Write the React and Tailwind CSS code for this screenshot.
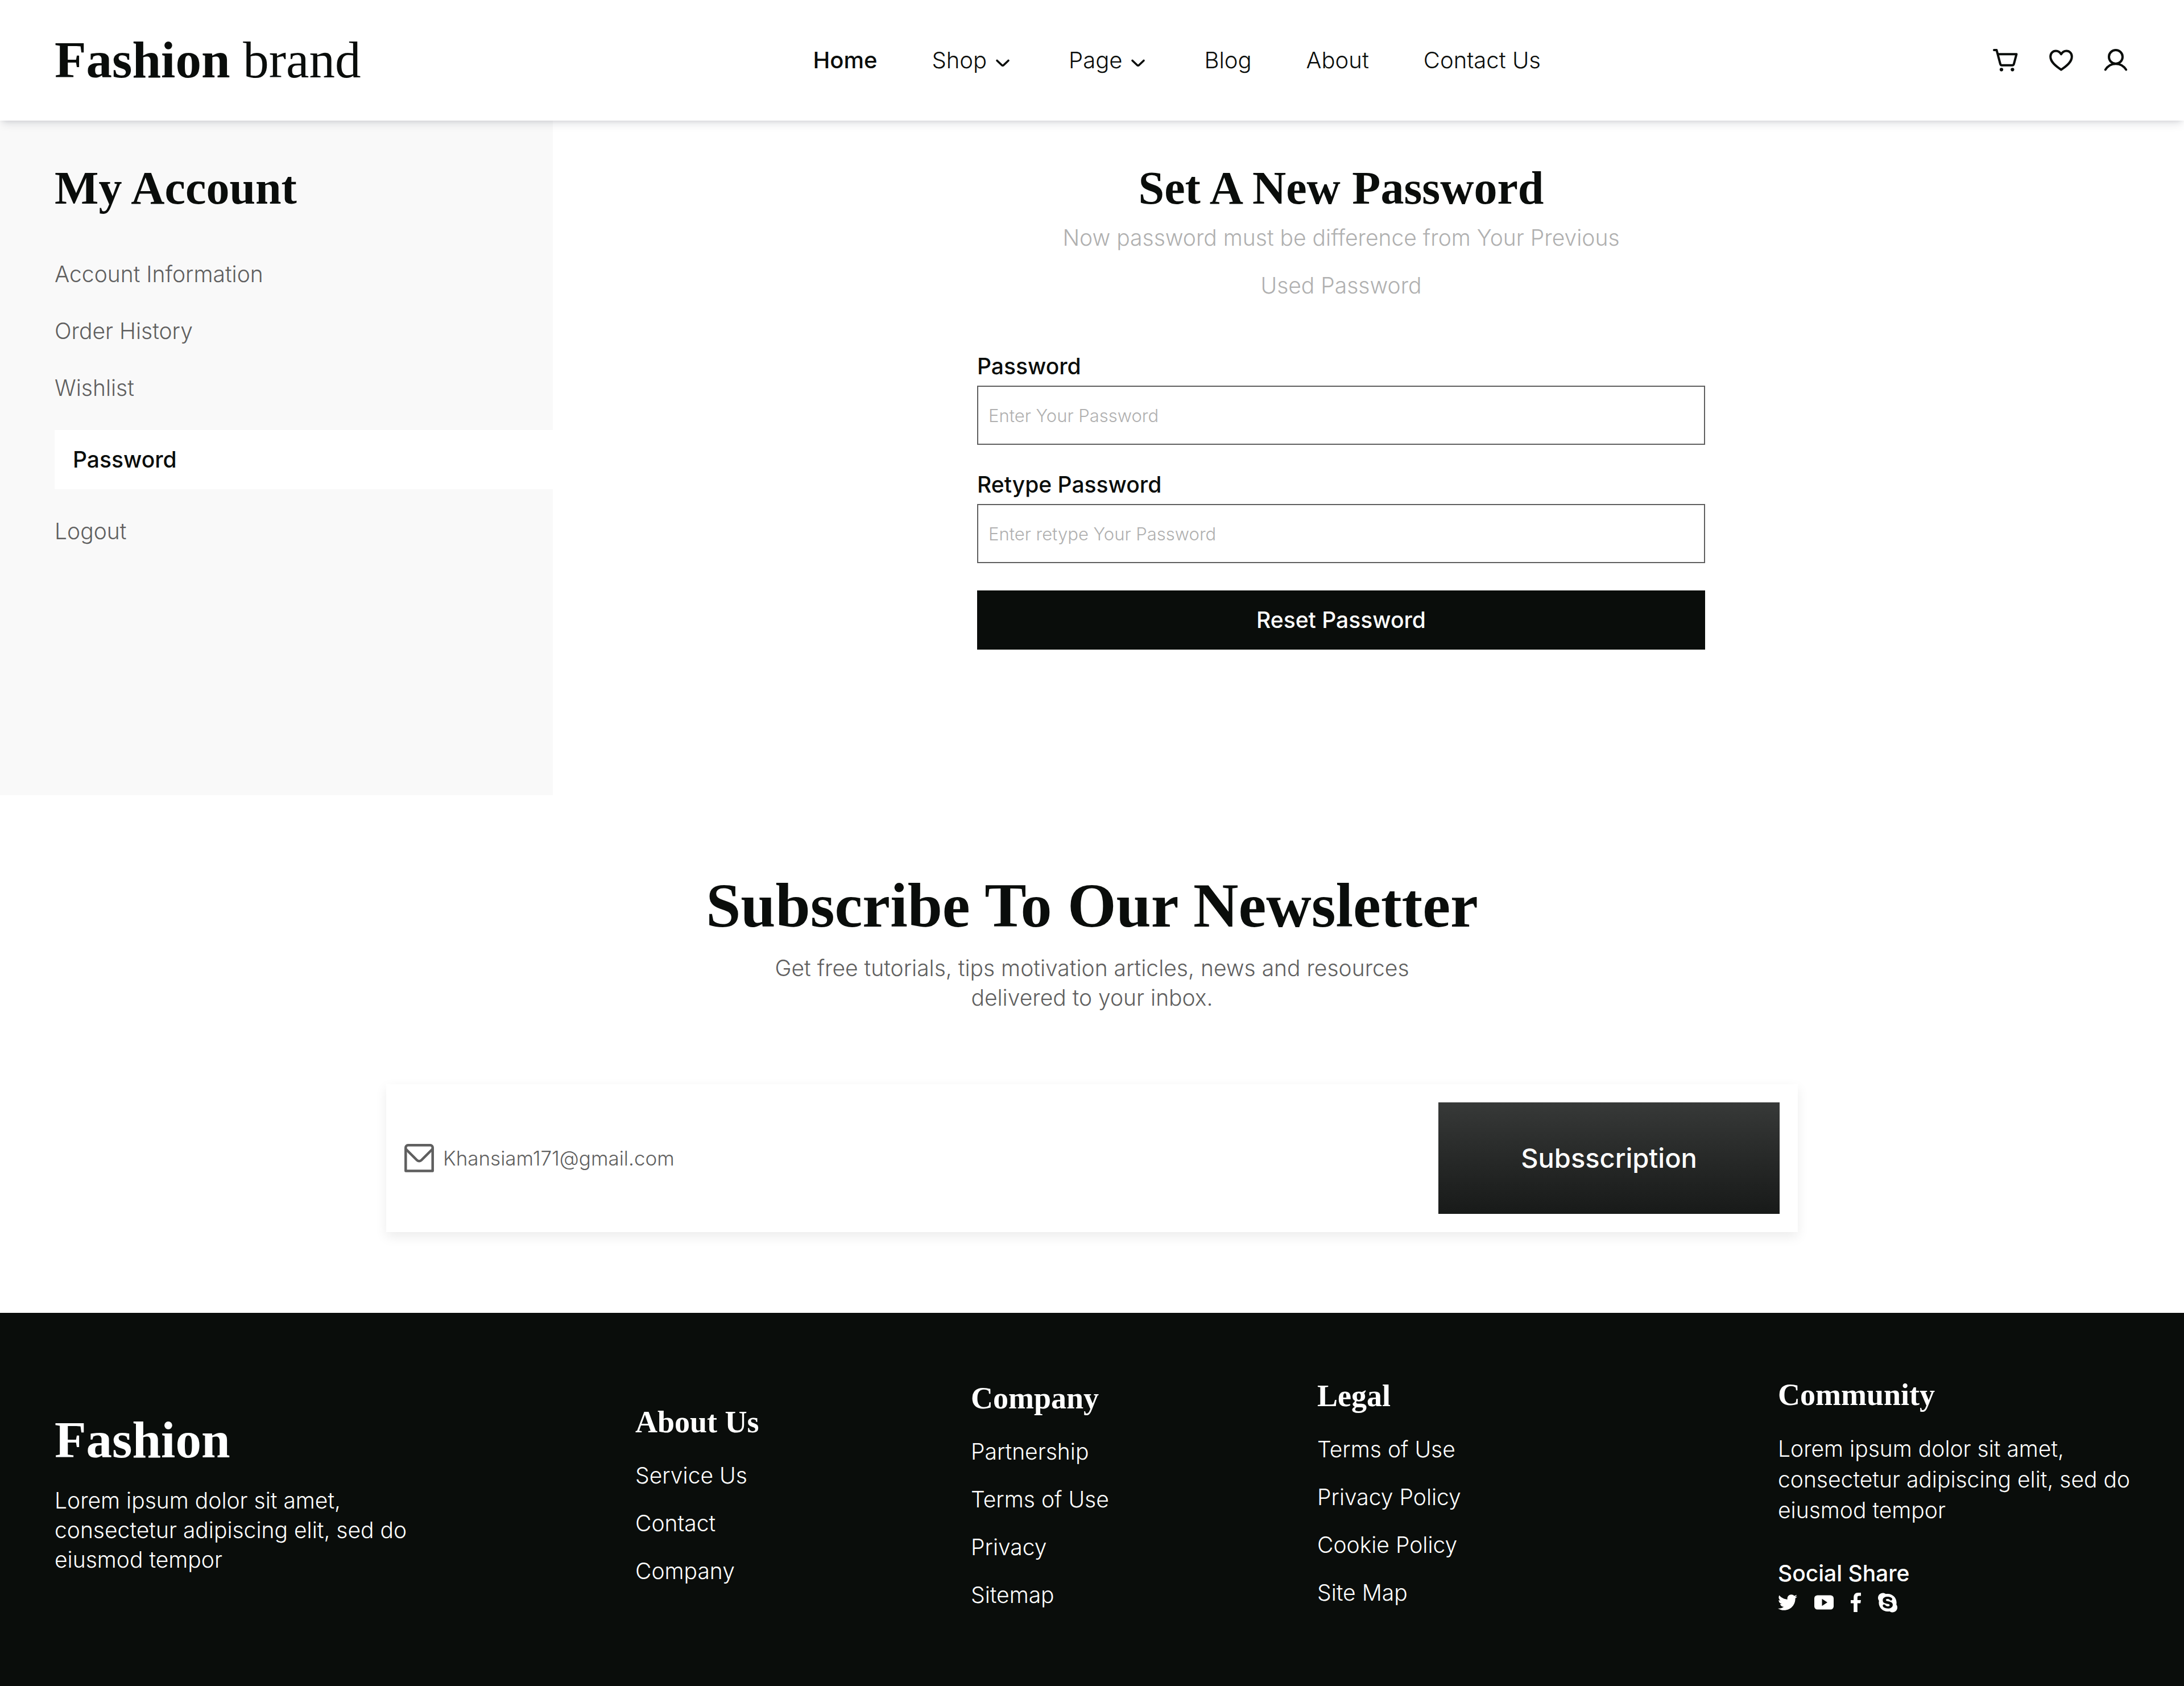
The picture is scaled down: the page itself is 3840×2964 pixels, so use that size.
import React from "react";
import { FaTwitter, FaSkype } from "react-icons/fa";

const serif = "font-['Liberation_Serif',serif]";

function Chevron() {
  return (
    <svg viewBox="0 0 40 40" className="size-10" fill="none" stroke="currentColor" strokeWidth="3.6" strokeLinecap="round" strokeLinejoin="round" aria-hidden="true">
      <path d="M10 20.500L18.700 28.700a1.800 1.800 0 0 0 2.600 0L30 20.500" />
    </svg>
  );
}

function CartIcon() {
  return (
    <svg viewBox="0 0 48 48" className="size-12" fill="none" stroke="currentColor" strokeWidth="4" strokeLinecap="round" strokeLinejoin="round" aria-hidden="true">
      <path d="M2 6h4.500L13 30.500c.4 1.500 1.200 2.200 2.600 2.200h18.600c1.500 0 2.300-.7 2.700-2.200L41.500 13.300H9" />
      <circle cx="15" cy="40.300" r="3.100" fill="currentColor" stroke="none" />
      <circle cx="34.400" cy="40.300" r="3.100" fill="currentColor" stroke="none" />
    </svg>
  );
}

function HeartIcon() {
  return (
    <svg viewBox="0 0 48 48" className="size-12" fill="none" stroke="currentColor" strokeWidth="4" strokeLinecap="round" strokeLinejoin="round" aria-hidden="true">
      <path d="M24 13.300C21.800 9.500 18.800 7.500 14.800 7.500 9.200 7.500 5.200 11.800 5.200 17.500 5.200 27 14.500 34.300 24 40.500 33.500 34.300 42.800 27 42.800 17.500 42.800 11.800 38.800 7.500 33.200 7.500 29.200 7.500 26.200 9.500 24 13.300Z" />
    </svg>
  );
}

function UserIcon() {
  return (
    <svg viewBox="0 0 48 48" className="size-12" fill="none" stroke="currentColor" strokeWidth="4" strokeLinecap="round" strokeLinejoin="round" aria-hidden="true">
      <circle cx="24" cy="18" r="12" />
      <path d="M5.800 40.500C9.800 34.300 16.200 30.200 24 30.200S38.200 34.300 42.200 40.500" />
    </svg>
  );
}

function MailIcon() {
  return (
    <svg viewBox="0 0 52 50" className="h-[50px] w-[52px] shrink-0" fill="none" stroke="currentColor" strokeWidth="4.5" strokeLinejoin="round" strokeLinecap="round" aria-hidden="true">
      <path d="M2.300 47.500V6.300a4 4 0 0 1 4-4h39.400a4 4 0 0 1 4 4v41.200Z" />
      <path d="M3 9.500L22 28.500a5.500 5.500 0 0 0 8 0L49 9.500" />
    </svg>
  );
}

const navItems = [
  { label: "Home", active: true },
  { label: "Shop", menu: true },
  { label: "Page", menu: true },
  { label: "Blog" },
  { label: "About" },
  { label: "Contact Us" },
];

function Header() {
  return (
    <header className="relative z-10 flex h-[212px] items-center justify-between bg-white px-24 shadow-[0_8px_16px_-4px_rgba(16,24,40,0.14),0_4px_8px_-4px_rgba(16,24,40,0.1)]">
      <a href="#" className={`${serif} text-[91px] leading-[104px]`}>
        <span className="font-bold">Fashion</span> brand
      </a>
      <nav className="flex items-center gap-24 text-[40px] leading-[52px]">
        {navItems.map((item) => (
          <a key={item.label} href="#" className={item.active ? "font-medium" : "flex items-center gap-2 font-light"}>
            {item.label}
            {item.menu && <Chevron />}
          </a>
        ))}
      </nav>
      <div className="flex items-center gap-12">
        <button type="button" aria-label="Cart"><CartIcon /></button>
        <button type="button" aria-label="Wishlist"><HeartIcon /></button>
        <button type="button" aria-label="Account"><UserIcon /></button>
      </div>
    </header>
  );
}

function Sidebar() {
  return (
    <aside className="flex w-[972px] shrink-0 flex-col bg-[#f9f9f9] pt-[74px] pb-[438px] pl-24">
      <h2 className={`${serif} text-[82px] leading-[90px] font-bold`}>My Account</h2>
      <nav className="mt-20 flex flex-col gap-12 text-[39px] leading-[52px] font-light text-[#5f5f5f]">
        <a href="#">Account Information</a>
        <a href="#">Order History</a>
        <a href="#">Wishlist</a>
        <a href="#" className="bg-white py-[26px] pl-8 font-medium text-[#0a0d0b]" aria-current="page">Password</a>
        <a href="#">Logout</a>
      </nav>
    </aside>
  );
}

function Field({ id, label, placeholder }) {
  return (
    <div className="mb-12 flex flex-col gap-3">
      <label htmlFor={id} className="text-[39px] leading-[44px] font-medium">{label}</label>
      <input
        id={id}
        type="password"
        placeholder={placeholder}
        className="h-[104px] w-full border-2 border-[#5f5f5f] px-[18px] text-[31px] font-light placeholder:text-[#b0b0b0] placeholder:opacity-100"
      />
    </div>
  );
}

function PasswordForm() {
  return (
    <main className="flex flex-1 flex-col items-center pt-[74px] pr-24">
      <h1 className={`${serif} text-[82px] leading-[90px] font-bold`}>Set A New Password</h1>
      <p className="text-center text-[39px] leading-[84px] font-light text-[#b0b0b0]">
        Now password must be difference from Your Previous
        <br />
        Used Password
      </p>
      <form className="mt-[78px] w-full max-w-[1280px]">
        <Field id="password" label="Password" placeholder="Enter Your Password" />
        <Field id="retype" label="Retype Password" placeholder="Enter retype Your Password" />
        <button type="button" className="h-[104px] w-full bg-[#0a0d0b] text-[39px] font-medium text-white">
          Reset Password
        </button>
      </form>
    </main>
  );
}

function Newsletter() {
  return (
    <section className="flex flex-col items-center px-24 pt-[130px] pb-[142px]">
      <h2 className={`${serif} text-[110px] leading-[128px] font-bold`}>Subscribe To Our Newsletter</h2>
      <p className="mt-5 text-center text-[39px] leading-[52px] font-light text-[#5f5f5f]">
        Get free tutorials, tips motivation articles, news and resources
        <br />
        delivered to your inbox.
      </p>
      <form className="mt-[126px] flex w-full max-w-[2482px] items-center bg-white p-8 text-[#5f5f5f] shadow-[0_8px_20px_rgba(0,0,0,0.08)]">
        <MailIcon />
        <input
          type="email"
          aria-label="Email address"
          placeholder="Khansiam171@gmail.com"
          className="ml-4 flex-1 text-[35px] font-light placeholder:text-[#5f5f5f] placeholder:opacity-100"
        />
        <button type="button" className="h-[196px] w-[600px] bg-linear-to-b from-[#373938] to-[#181a19] text-[47px] font-medium text-white">
          Subsscription
        </button>
      </form>
    </section>
  );
}

function LinkColumn({ title, links, className = "" }) {
  return (
    <div className={className}>
      <h3 className={`${serif} text-[54px] leading-[64px] font-bold`}>{title}</h3>
      <ul className="mt-5 text-[39px] leading-[84px] font-light">
        {links.map((text) => (
          <li key={text}><a href="#">{text}</a></li>
        ))}
      </ul>
    </div>
  );
}

function Footer() {
  return (
    <footer className="grid grow grid-cols-[1021fr_590fr_609fr_810fr_minmax(0,618fr)] items-center bg-[#0a0d0b] px-24 py-16 text-white">
      <div className="pb-6">
        <h2 className={`${serif} text-[91px] leading-[104px] font-bold`}>Fashion</h2>
        <p className="mt-7 text-[39px] leading-[52px] font-light">
          Lorem ipsum dolor sit amet,
          <br />
          consectetur adipiscing elit, sed do
          <br />
          eiusmod tempor
        </p>
      </div>
      <LinkColumn title="About Us" links={["Service Us", "Contact", "Company"]} />
      <LinkColumn title="Company" links={["Partnership", "Terms of Use", "Privacy", "Sitemap"]} />
      <LinkColumn title="Legal" className="pb-2" links={["Terms of Use", "Privacy Policy", "Cookie Policy", "Site Map"]} />
      <div className="pb-4">
        <h3 className={`${serif} text-[54px] leading-[64px] font-bold`}>Community</h3>
        <p className="mt-9 text-[39px] leading-[54px] font-light whitespace-nowrap">
          Lorem ipsum dolor sit amet,
          <br />
          consectetur adipiscing elit, sed do
          <br />
          eiusmod tempor
        </p>
        <h4 className="mt-[60px] text-[39px] leading-[48px] font-medium">Social Share</h4>
        <div className="mt-2 flex items-center gap-[30px]">
          <a href="#" aria-label="Twitter"><FaTwitter className="size-[34px]" /></a>
          <a href="#" aria-label="YouTube">
            <svg viewBox="0 0 34 34" className="size-[34px]" fill="currentColor" fillRule="evenodd" aria-hidden="true">
              <path d="M5.500 4.500h23A5.500 5.500 0 0 1 34 10v14a5.500 5.500 0 0 1-5.500 5.500h-23A5.500 5.500 0 0 1 0 24V10a5.500 5.500 0 0 1 5.500-5.500ZM13.500 10.800v12.400L23 17Z" />
            </svg>
          </a>
          <a href="#" aria-label="Facebook">
            <svg viewBox="0 0 18 34" className="h-[34px] w-[18px]" fill="currentColor" aria-hidden="true">
              <path d="M5.200 34V18.500H0v-5.500h5.200V8.500C5.200 3 8 0 13 0h5v5.500h-3.200c-2.300 0-3 1-3 3V13H18l-.8 5.500h-5.400V34Z" />
            </svg>
          </a>
          <a href="#" aria-label="Skype"><FaSkype className="h-[39px] w-[34px]" /></a>
        </div>
      </div>
    </footer>
  );
}

export default function App() {
  return (
    <div className="flex min-h-screen flex-col bg-white font-['Inter',sans-serif] text-[#0a0d0b]">
      <Header />
      <div className="flex">
        <Sidebar />
        <PasswordForm />
      </div>
      <Newsletter />
      <Footer />
    </div>
  );
}
